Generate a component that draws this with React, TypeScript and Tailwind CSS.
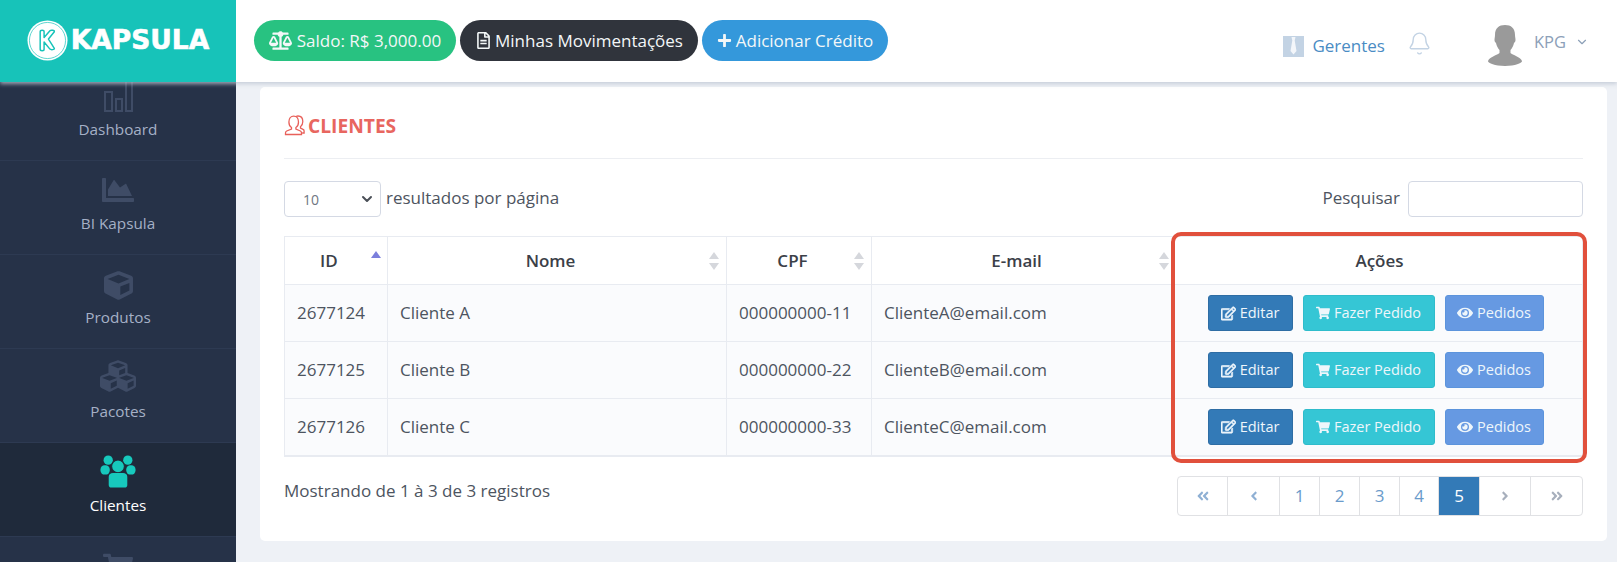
import React from 'react';
import {
  FaAngleDoubleLeft,
  FaAngleDoubleRight,
  FaAngleLeft,
  FaAngleRight,
  FaBalanceScale,
  FaChartArea,
  FaCube,
  FaCubes,
  FaEye,
  FaPlus,
  FaRegEdit,
  FaRegFileAlt,
  FaShoppingCart,
} from 'react-icons/fa';
import { Bell, ChevronDown } from 'lucide-react';

const clients = [
  { id: '2677124', name: 'Cliente A', cpf: '000000000-11', email: 'ClienteA@email.com' },
  { id: '2677125', name: 'Cliente B', cpf: '000000000-22', email: 'ClienteB@email.com' },
  { id: '2677126', name: 'Cliente C', cpf: '000000000-33', email: 'ClienteC@email.com' },
];

const BarsIcon = () => (
  <svg width="30" height="32" viewBox="0 0 30 32" fill="none" stroke="#3f4c66" strokeWidth="2">
    <rect x="2" y="12" width="7" height="19" />
    <rect x="13" y="19" width="6" height="12" />
    <rect x="23" y="1" width="6" height="30" />
  </svg>
);

const GroupIcon = () => (
  <svg width="36" height="33" viewBox="0 0 34 32" fill="#17c9bd">
    <circle cx="7.5" cy="5" r="4.5" />
    <circle cx="26.5" cy="5" r="4.5" />
    <rect x="0" y="10" width="9" height="9" rx="4" />
    <rect x="25" y="10" width="9" height="9" rx="4" />
    <circle cx="17" cy="11" r="6.2" stroke="#1f2a3b" strokeWidth="1" />
    <path d="M8 21c0-2.500 2-3.600 4-3.600h10c2 0 4 1.100 4 3.600v8c0 1.600-1 2.600-2.600 2.600H10.600C9 31.600 8 30.600 8 29z" />
  </svg>
);

const TwoUsersIcon = () => (
  <svg width="21" height="21" viewBox="0 0 21 21" fill="none" stroke="#e8605a" strokeWidth="1.3">
    <path d="M7.500 12.500c-1.600-1-2.600-3-2.600-5.500 0-3.500 2-5.800 4.800-5.800s4.800 2.300 4.800 5.800c0 2.500-1 4.500-2.600 5.500v1.500l4.500 2c.8.400 1.100 1 1.100 2v1.500H1.500V18c0-1 .4-1.600 1.200-2l4.800-2z" />
    <path d="M12 1.500c.6-.3 1.300-.5 2-.5 2.800 0 4.800 2.200 4.800 5.500 0 2.300-.9 4.200-2.300 5.200v1.500l2.600 1.200c.7.300 1 .9 1 1.600V18h-2" />
  </svg>
);

const LogoMark = () => (
  <svg width="41" height="41" viewBox="0 0 42 42">
    <circle cx="21" cy="21" r="20.500" fill="#fff" />
    <circle cx="21" cy="21" r="18.500" fill="none" stroke="#17c3b9" strokeWidth="0.7" />
    <path
      d="M13.500 12c0-1 1-1.500 2-1.500s2 .5 2 1.500v6l6-7c.8-.9 5-.8 4.500 1l-6 7.500 6 9.500c.5 1.500-3.500 1.800-4.500.8l-6-7.300V30c0 1-1 1.500-2 1.500s-2-.5-2-1.500z"
      fill="none"
      stroke="#17c3b9"
      strokeWidth="1.500"
      strokeLinejoin="round"
    />
  </svg>
);

const TieBadge = () => (
  <svg width="21" height="21" viewBox="0 0 21 21">
    <rect width="21" height="21" fill="#c3d3e4" />
    <path d="M8.500 1h4l-.8 3.500 1.800 10.500-3 3.500-3-3.500L9.300 4.500z" fill="#f3f6fa" />
  </svg>
);

const Avatar = () => (
  <svg width="34" height="41" viewBox="0 0 34 41" fill="#9a9a9a">
    <path d="M17 0c6 0 10 3 10 10 0 2 .5 3 .5 5s-1 2.500-1.500 3c-.7 3-2 5.500-3.500 7v3c2 2 10 4 11.500 8 .4 1.500-6 5-17 5S-.400 37.500 0 36c1.500-4 9.500-6 11.500-8v-3C10 23.500 8.700 21 8 18c-.5-.5-1.500-1-1.500-3s.5-3 .5-5C7 3 11 0 17 0z" />
  </svg>
);

const SortIcon = ({ active = false }: { active?: boolean }) => (
  <svg width="10" height="18" viewBox="0 0 10 18" className="shrink-0">
    <path d="M5 0l5 7H0z" fill={active ? '#7b7fdc' : '#d5d7dc'} />
    {!active && <path d="M5 18l5-7H0z" fill="#d5d7dc" />}
  </svg>
);

const NavItem = ({
  label,
  icon,
  active,
}: {
  label?: string;
  icon: React.ReactNode;
  active?: boolean;
}) => (
  <div
    className={`flex h-[94px] shrink-0 flex-col items-center border-b border-[#2d3a52] pt-[12px] text-[15.300px] ${
      active ? 'bg-[#1f2a3b] text-white' : 'text-[#a5b0c6]'
    }`}
  >
    <div className="flex h-[33px] items-end justify-center text-[#3f4c66]">{icon}</div>
    {label && <span className="mt-[6px] leading-[22px]">{label}</span>}
  </div>
);

const ActionButton = ({
  icon,
  label,
  className,
}: {
  icon: React.ReactNode;
  label: string;
  className: string;
}) => (
  <button
    type="button"
    className={`flex h-[36px] items-center justify-center gap-[4px] rounded-[3px] border text-[14.500px] text-[#eef6fb] ${className}`}
  >
    {icon}
    {label}
  </button>
);

const pages = [
  { key: 'first', width: 'w-[50px]', content: <FaAngleDoubleLeft size={14} className="text-[#8fb0d4]" /> },
  { key: 'prev', width: 'w-[52px]', content: <FaAngleLeft size={14} className="text-[#8fb0d4]" /> },
  { key: '1', width: 'w-[40px]', content: '1' },
  { key: '2', width: 'w-[40px]', content: '2' },
  { key: '3', width: 'w-[40px]', content: '3' },
  { key: '4', width: 'w-[39px]', content: '4' },
  { key: '5', width: 'w-[41px]', content: '5', active: true },
  { key: 'next', width: 'w-[51px]', content: <FaAngleRight size={14} className="text-[#a7afbc]" /> },
  { key: 'last', width: 'w-[51px]', content: <FaAngleDoubleRight size={14} className="text-[#a7afbc]" /> },
];

export default function App() {
  return (
    <div className="flex h-[562px] w-[1617px] flex-col overflow-hidden bg-[#eef1f6] font-['Open_Sans',sans-serif] text-[#4d5460]">
      {/* Top bar */}
      <header className="z-10 flex h-[82px] shrink-0 items-center bg-white pr-[28px] shadow-[0_2px_4px_rgba(190,198,210,0.8)]">
        <div className="flex h-full w-[236px] shrink-0 items-center justify-center gap-[3px] bg-[#17c3b9] pb-[1px]">
          <LogoMark />
          <span className="font-['DejaVu_Sans',sans-serif] text-[26.500px] font-bold leading-none text-white [-webkit-text-stroke:0.6px_white]">
            KAPSULA
          </span>
        </div>
        <div className="ml-[18px] flex items-center gap-[4px] pb-[1px] text-[17px] font-medium text-[#f3f7f8]">
          <div className="flex h-[41px] w-[202px] items-center justify-center gap-[5px] rounded-full bg-[#28c281]">
            <FaBalanceScale size={23} />
            Saldo: R$ 3,000.00
          </div>
          <div className="flex h-[41px] w-[238px] items-center justify-center gap-[3px] rounded-full bg-[#30343c]">
            <FaRegFileAlt size={17} />
            Minhas Movimentações
          </div>
          <div className="flex h-[41px] w-[186px] items-center justify-center gap-[4px] rounded-full bg-[#3498db]">
            <FaPlus size={15} />
            Adicionar Crédito
          </div>
        </div>
        <div className="ml-auto flex items-center pt-[10px]">
          <TieBadge />
          <span className="ml-[8px] text-[17px] text-[#4a8cc4]">Gerentes</span>
          <Bell size={25} strokeWidth={1.3} className="mb-[6px] ml-[22px] text-[#c3d3e4]" />
          <div className="mb-[2px] ml-[56px]">
            <Avatar />
          </div>
          <span className="mb-[8px] ml-[12px] text-[16.500px] text-[#8ca0b8]">KPG</span>
          <ChevronDown size={14} className="mb-[8px] ml-[9px] text-[#8ca0b8]" />
        </div>
      </header>

      <div className="flex min-h-0 flex-1">
        {/* Sidebar */}
        <aside className="w-[236px] shrink-0 overflow-hidden bg-[#263248]">
          <div className="-mt-[15px] flex flex-col">
            <NavItem label="Dashboard" icon={<BarsIcon />} />
            <NavItem label="BI Kapsula" icon={<FaChartArea size={32} />} />
            <NavItem label="Produtos" icon={<FaCube size={29} />} />
            <NavItem label="Pacotes" icon={<FaCubes size={36} />} />
            <NavItem label="Clientes" icon={<GroupIcon />} active />
            <NavItem icon={<FaShoppingCart size={30} />} />
          </div>
        </aside>

        {/* Main card */}
        <main className="min-w-0 flex-1 pl-[24px] pr-[10px] pt-[5px]">
          <section className="h-[454px] rounded-[5px] bg-white px-[24px]">
            <div className="flex h-[72px] items-center gap-[3px] border-b border-[#eceef2] pt-[6px]">
              <TwoUsersIcon />
              <h1 className="text-[19.200px] font-bold leading-none text-[#e8665f]">CLIENTES</h1>
            </div>

            <div className="mt-[22px] flex h-[36px] items-center justify-between">
              <div className="flex items-center">
                <div className="flex h-[36px] w-[97px] items-center justify-between rounded-[4px] border border-[#d4d9e4] pl-[18px] pr-[5px] text-[14px] text-[#707682]">
                  10
                  <ChevronDown size={16} strokeWidth={3} className="text-[#4a4f57]" />
                </div>
                <span className="mb-[2px] ml-[5px] text-[17px]">resultados por página</span>
              </div>
              <div className="flex items-center">
                <span className="mb-[2px] text-[17px]">Pesquisar</span>
                <div className="ml-[8px] h-[36px] w-[175px] rounded-[4px] border border-[#d4d9e4]" />
              </div>
            </div>

            <div className="relative mt-[19px]">
              <table className="w-[1299px] table-fixed border-collapse border-b-2 border-[#e8ebf1] text-[17px]">
                <colgroup>
                  <col className="w-[103px]" />
                  <col className="w-[339px]" />
                  <col className="w-[145px]" />
                  <col className="w-[301px]" />
                  <col />
                </colgroup>
                <thead>
                  <tr className="h-[48px] font-semibold text-[#3b4048]">
                    <th className="border border-[#e8ebf1] pl-[12px] pr-[6px] font-semibold">
                      <div className="flex items-start justify-between">
                        <span className="ml-[23px] leading-[24px]">ID</span>
                        <span className="mt-[2px]"><SortIcon active /></span>
                      </div>
                    </th>
                    <th className="border border-[#e8ebf1] pl-[12px] pr-[7px] font-semibold">
                      <div className="flex items-center justify-between">
                        <span className="flex-1 pr-[8px] text-center">Nome</span>
                        <SortIcon />
                      </div>
                    </th>
                    <th className="border border-[#e8ebf1] pl-[12px] pr-[7px] font-semibold">
                      <div className="flex items-center justify-between">
                        <span className="flex-1 pr-[8px] text-center">CPF</span>
                        <SortIcon />
                      </div>
                    </th>
                    <th className="border border-[#e8ebf1] pl-[12px] pr-[3px] font-semibold">
                      <div className="flex items-center justify-between">
                        <span className="flex-1 pr-[10px] text-center">E-mail</span>
                        <SortIcon />
                      </div>
                    </th>
                    <th className="border border-[#e8ebf1] pl-[4px] font-semibold">Ações</th>
                  </tr>
                </thead>
                <tbody>
                  {clients.map((c) => (
                    <tr key={c.id} className="h-[57px] bg-[#fafbfd]">
                      <td className="border border-[#e8ebf1] px-[12px]">{c.id}</td>
                      <td className="border border-[#e8ebf1] px-[12px]">{c.name}</td>
                      <td className="border border-[#e8ebf1] px-[12px]">{c.cpf}</td>
                      <td className="border border-[#e8ebf1] px-[12px]">{c.email}</td>
                      <td className="border border-[#e8ebf1]">
                        <div className="flex justify-center gap-[10px] pr-[4px]">
                          <ActionButton
                            icon={<FaRegEdit size={15} stroke="currentColor" strokeWidth={24} />}
                            label="Editar"
                            className="w-[85px] border-[#2e6da4] bg-[#337ab7]"
                          />
                          <ActionButton
                            icon={<FaShoppingCart size={14} />}
                            label="Fazer Pedido"
                            className="w-[132px] border-[#2fbccb] bg-[#35c6d5]"
                          />
                          <ActionButton
                            icon={<FaEye size={16} />}
                            label="Pedidos"
                            className="w-[99px] border-[#5c94dc] bg-[#6699e2]"
                          />
                        </div>
                      </td>
                    </tr>
                  ))}
                </tbody>
              </table>
              {/* red annotation around the actions column */}
              <div className="pointer-events-none absolute -top-[4px] left-[887px] h-[231px] w-[416px] rounded-[10px] border-[4px] border-[#e1503c]" />
            </div>

            <div className="mt-[19px] flex items-start justify-between">
              <span className="mt-[2px] text-[17px]">Mostrando de 1 à 3 de 3 registros</span>
              <nav className="flex h-[40px] overflow-hidden rounded-[4px] border border-[#e0e1e4] text-[17px] text-[#6a9bcb]">
                {pages.map((p) => (
                  <div
                    key={p.key}
                    className={`flex items-center justify-center border-r border-[#e0e1e4] last:border-r-0 ${p.width} ${
                      p.active ? 'bg-[#337ab7] text-white' : ''
                    }`}
                  >
                    {p.content}
                  </div>
                ))}
              </nav>
            </div>
          </section>
        </main>
      </div>
    </div>
  );
}
